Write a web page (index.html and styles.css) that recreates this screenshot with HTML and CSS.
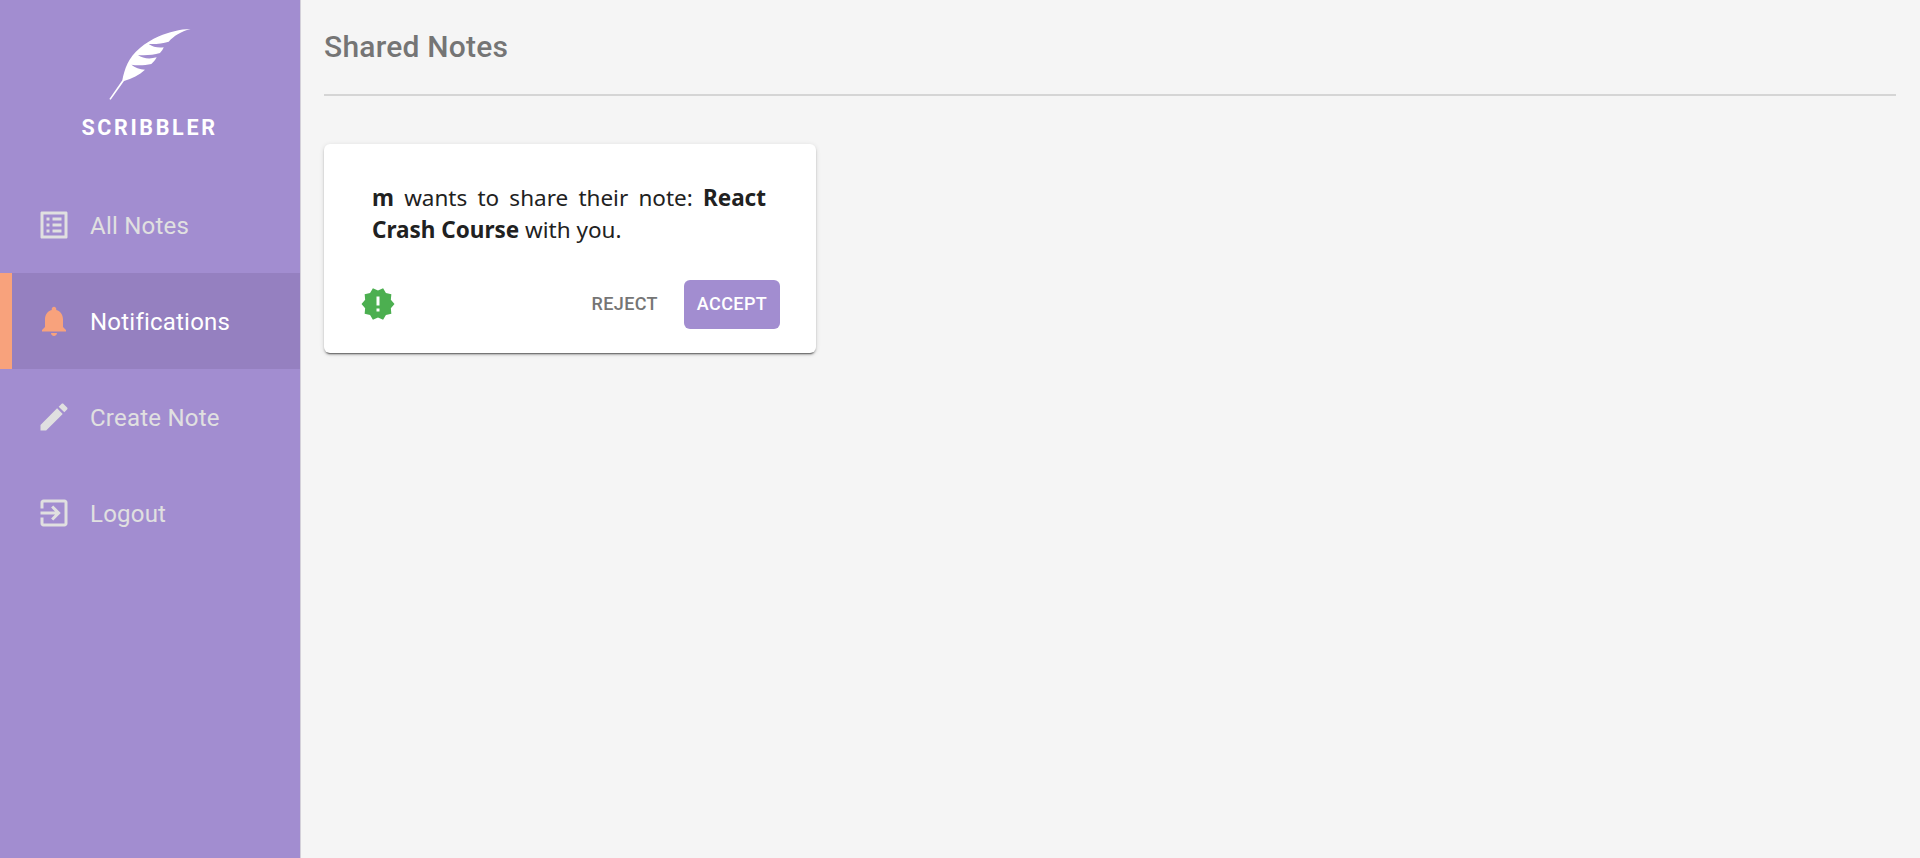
FILE: index.html
```html
<!DOCTYPE html>
<html lang="en">
<head>
<meta charset="utf-8">
<title>Scribbler</title>
<link rel="stylesheet" href="styles.css">
</head>
<body>
<div class="app">
  <aside class="sidebar">
    <div class="brand">
      <svg class="feather" viewBox="0 0 270 240"><path d="M272 27C240 27 206 37 177 49C133 68 98 99 83 130C74 149 70 166 67 181L28 237L32 239L72 183C96 176 118 165 135 149C119 147 105 144 94 134C112 137 136 136 154 132C160 127 166 120 170 112C150 118 128 116 114 105C135 107 160 105 180 99C185 94 189 88 191 82C174 84 158 81 146 72C166 73 188 71 206 65C222 48 241 35 272 27Z"/></svg>
      <span class="brand-name">SCRIBBLER</span>
    </div>
    <nav class="menu">
      <a class="item"><svg class="icon" viewBox="0 0 24 24"><path d="M11 7h6v2h-6zm0 4h6v2h-6zm0 4h6v2h-6zM7 7h2v2H7zm0 4h2v2H7zm0 4h2v2H7zM20.1 3H3.9c-.5 0-.9.4-.9.9v16.2c0 .4.4.9.9.9h16.2c.4 0 .9-.5.9-.9V3.900c0-.5-.5-.9-.9-.9zM19 19H5V5h14v14z"/></svg><span class="label">All Notes</span></a>
      <a class="item active"><svg class="icon" viewBox="0 0 24 24"><path d="M12 22c1.100 0 2-.9 2-2h-4c0 1.100.89 2 2 2zm6-6v-5c0-3.070-1.640-5.640-4.500-6.320V4c0-.83-.67-1.500-1.500-1.500s-1.500.67-1.500 1.500v.68C7.630 5.360 6 7.920 6 11v5l-2 2v1h16v-1l-2-2z"/></svg><span class="label">Notifications</span></a>
      <a class="item"><svg class="icon" viewBox="0 0 24 24"><path d="M3 17.250V21h3.750L17.810 9.940l-3.750-3.750L3 17.250zM20.710 7.040c.39-.39.39-1.020 0-1.410l-2.340-2.340c-.39-.39-1.020-.39-1.410 0l-1.830 1.830 3.750 3.750 1.830-1.830z"/></svg><span class="label">Create Note</span></a>
      <a class="item"><svg class="icon" viewBox="0 0 24 24"><path d="M10.090 15.590L11.500 17l5-5-5-5-1.410 1.410L12.670 11H3v2h9.670l-2.580 2.590zM19 3H5c-1.110 0-2 .9-2 2v4h2V5h14v14H5v-4H3v4c0 1.100.89 2 2 2h14c1.100 0 2-.9 2-2V5c0-1.100-.9-2-2-2z"/></svg><span class="label">Logout</span></a>
    </nav>
  </aside>
  <main class="content">
    <h1 class="title">Shared Notes</h1>
    <section class="card">
      <p class="message"><b>m</b> wants to share their note: <b>React Crash Course</b> with you.</p>
      <div class="actions">
        <svg class="icon badge" viewBox="0 0 24 24"><path d="M23 12l-2.440-2.780.34-3.680-3.610-.82-1.890-3.180L12 3 8.600 1.540 6.710 4.720l-3.610.81.34 3.680L1 12l2.440 2.780-.34 3.690 3.610.82 1.890 3.180L12 21l3.400 1.460 1.890-3.180 3.610-.82-.34-3.680L23 12zm-10 5h-2v-2h2v2zm0-4h-2V7h2v6z"/></svg>
        <button class="btn">REJECT</button>
        <button class="btn primary">ACCEPT</button>
      </div>
    </section>
  </main>
</div>
</body>
</html>
```
FILE: styles.css
```css
* { box-sizing: border-box; }
body { margin: 0; background: #f5f5f5; font-family: Roboto, sans-serif; }
.app { display: flex; min-height: 100vh; }
.sidebar { width: 301px; flex: none; background: #a28dd0; border-right: 1px solid #d3d0d9; }
.brand { height: 177px; display: flex; flex-direction: column; align-items: center; padding-top: 20px; }
.feather { width: 90px; height: 80px; overflow: visible; fill: #fff; margin-right: 11px; }
.brand-name { margin-top: 14px; padding-right: 1px; color: #fff; font-size: 21.5px; line-height: 28px; font-weight: 700; letter-spacing: 2.65px; }
.menu { display: flex; flex-direction: column; }
.item { height: 96px; display: flex; align-items: center; gap: 18px; padding-left: 24px; border-left: 12px solid transparent; color: #e0e0e0; font-size: 24px; line-height: 36px; letter-spacing: 0.22px; }
.label { padding-top: 2px; }
.item.active { background: #9580c0; border-left-color: #f8a27c; color: #fff; }
.item.active .icon { fill: #f8a27c; }
.icon { width: 36px; height: 36px; flex: none; fill: currentColor; }
.content { flex: 1; padding: 0 24px 0 23px; }
.title { margin: 0; height: 96px; padding-top: 28px; border-bottom: 2px solid #d5d5d5; color: #757575; font-size: 30px; line-height: 38px; font-weight: 500; letter-spacing: 0.22px; }
.card { width: 492px; height: 209px; margin-top: 48px; padding: 38px 36px 0; background: #fff; border-radius: 6px; box-shadow: 0 3px 1px -2px rgba(0,0,0,.4), 0 2px 2px rgba(0,0,0,.2), 0 1px 5px rgba(0,0,0,.12); }
.message { margin: 0 14px 0 12px; height: 64px; font-family: "Noto Sans", sans-serif; font-size: 22.5px; line-height: 32px; color: #212121; text-align: justify; letter-spacing: 0; }
.actions { display: flex; align-items: center; margin-top: 34px; height: 49px; }
.badge { fill: #4caf50; margin: 0 auto 1px 0; }
.btn { height: 49px; border: 0; border-radius: 6px; background: none; padding: 0 12px 2px; color: #757575; font: 500 18px/28px Roboto, sans-serif; letter-spacing: 0.4px; }
.primary { width: 96px; margin-left: 14px; background: #a28dd0; color: #fff; }
```
